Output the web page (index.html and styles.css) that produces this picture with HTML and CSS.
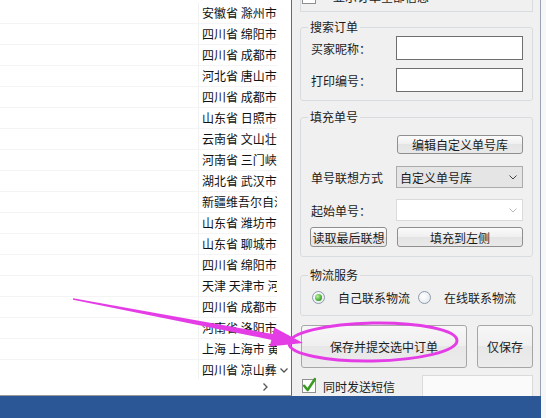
FILE: index.html
```html
<!DOCTYPE html>
<html lang="zh-CN">
<head>
    <meta charset="UTF-8">
    <meta name="viewport" content="width=device-width, initial-scale=1.0">
    <title>打印订单</title>
    <link rel="stylesheet" href="styles.css">
</head>
<body>
    <div class="screen">
        <div class="list">
            <div class="rows">
                <div class="row"><span class="cell">安徽省 滁州市 天长市</span></div>
                <div class="row"><span class="cell">四川省 绵阳市 涪城区</span></div>
                <div class="row"><span class="cell">四川省 成都市 武侯区</span></div>
                <div class="row"><span class="cell">河北省 唐山市 路北区</span></div>
                <div class="row"><span class="cell">四川省 成都市 金牛区</span></div>
                <div class="row"><span class="cell">山东省 日照市 东港区</span></div>
                <div class="row"><span class="cell">云南省 文山壮族苗族自治州</span></div>
                <div class="row"><span class="cell">河南省 三门峡市 湖滨区</span></div>
                <div class="row"><span class="cell">湖北省 武汉市 洪山区</span></div>
                <div class="row"><span class="cell">新疆维吾尔自治区 乌鲁木齐市</span></div>
                <div class="row"><span class="cell">山东省 潍坊市 奎文区</span></div>
                <div class="row"><span class="cell">山东省 聊城市 东昌府区</span></div>
                <div class="row"><span class="cell">四川省 绵阳市 游仙区</span></div>
                <div class="row"><span class="cell">天津 天津市 河西区</span></div>
                <div class="row"><span class="cell">四川省 成都市 青羊区</span></div>
                <div class="row"><span class="cell">河南省 洛阳市 西工区</span></div>
                <div class="row"><span class="cell">上海 上海市 黄浦区</span></div>
                <div class="row"><span class="cell">四川省 凉山彝族自治州</span></div>
            </div>
            <div class="vscroll">
                <svg width="8" height="5" viewBox="0 0 8 5"><polyline points="0.5,0.5 4,4 7.5,0.5" fill="none" stroke="#555" stroke-width="1.3"/></svg>
            </div>
            <div class="hscroll">
                <svg width="5" height="8" viewBox="0 0 5 8"><polyline points="0.5,0.5 4,4 0.5,7.5" fill="none" stroke="#555" stroke-width="1.3"/></svg>
            </div>
        </div>

        <div class="panel">
            <div class="top-group">
                <label class="check"><span class="box"></span>显示订单全部信息</label>
            </div>

            <fieldset class="group search">
                <legend>搜索订单</legend>
                <div class="form">
                    <span>买家昵称：</span><input class="field" type="text">
                    <span>打印编号：</span><input class="field" type="text">
                </div>
            </fieldset>

            <fieldset class="group fill">
                <legend>填充单号</legend>
                <div class="line">
                    <span></span><button class="btn wide">编辑自定义单号库</button>
                </div>
                <div class="line gap-12">
                    <span>单号联想方式</span>
                    <div class="select">自定义单号库
                        <svg width="8" height="5" viewBox="0 0 8 5"><polyline points="0.5,0.5 4,4 7.5,0.5" fill="none" stroke="#444" stroke-width="1"/></svg>
                    </div>
                </div>
                <div class="line gap-11">
                    <span>起始单号：</span>
                    <div class="select combo">
                        <svg width="8" height="5" viewBox="0 0 8 5"><polyline points="0.5,0.5 4,4 7.5,0.5" fill="none" stroke="#b8b8b8" stroke-width="1"/></svg>
                    </div>
                </div>
                <div class="line gap-6">
                    <button class="btn short">读取最后联想</button><button class="btn wide">填充到左侧</button>
                </div>
            </fieldset>

            <fieldset class="group logistics">
                <legend>物流服务</legend>
                <div class="radios">
                    <span class="radio on"></span><span class="radio-text">自己联系物流</span>
                    <span class="radio second"></span><span class="radio-text">在线联系物流</span>
                </div>
            </fieldset>

            <div class="actions">
                <button class="btn big submit">保存并提交选中订单</button>
                <button class="btn big only">仅保存</button>
            </div>

            <div class="sms">
                <span class="box checked">
                    <svg width="14" height="14" viewBox="0 0 14 14"><polyline points="2.2,6.8 5.6,11 12.8,0.2" fill="none" stroke="#3a9a22" stroke-width="2.6" stroke-linecap="round" stroke-linejoin="round"/></svg>
                </span>
                <span class="sms-text">同时发送短信</span>
                <div class="sms-field"></div>
            </div>
        </div>

        <div class="edge"></div>
        <div class="taskbar"></div>
    </div>

    <!-- annotation drawn on top of the screenshot -->
    <svg class="marks" width="546" height="418" viewBox="0 0 546 418">
        <polygon points="73.1,298.3 72.9,299.7 274.4,340.4 275.6,334.6" fill="#e43de6"/>
        <polygon points="274.2,327.6 269.8,346.4 303,343" fill="#e43de6"/>
        <ellipse cx="373" cy="342" rx="84" ry="19" fill="none" stroke="#e43de6" stroke-width="3" transform="rotate(-1 373 342)"/>
    </svg>
</body>
</html>
```

FILE: styles.css
```css
body {
    margin: 0;
    width: 546px;
    height: 418px;
    overflow: hidden;
    font-family: "Noto Sans CJK SC", "Microsoft YaHei", sans-serif;
    font-size: 12px;
    color: #1b1b1b;
    background-color: #f7f7f7;
}
.screen {
    display: grid;
    grid-template-columns: 292px 249px 1fr;
    grid-template-rows: 396px 22px;
    height: 418px;
}

/* order list on the left */
.list {
    display: grid;
    grid-template-columns: 1fr 14px;
    grid-template-rows: 1fr 16px;
    background-color: #ffffff;
    border-right: 1px solid #6a6a6a;
    border-bottom: 1px solid #9a9a9a;
    overflow: hidden;
}
.rows {
    padding-top: 3px;
    overflow: hidden;
}
.row {
    display: grid;
    grid-template-columns: 198px 1fr;
    height: 21px;
    box-sizing: border-box;
    border-bottom: 1px solid #f4f4f4;
}
.cell {
    grid-column: 2;
    padding-left: 3px;
    line-height: 20px;
    white-space: nowrap;
    overflow: hidden;
    border-left: 1px solid #f1f1f1;
    color: #111;
}
.vscroll {
    display: flex;
    align-items: flex-end;
    justify-content: center;
    padding-bottom: 6px;
}
.hscroll {
    display: flex;
    align-items: center;
    justify-content: flex-end;
    padding-right: 9px;
}

/* right side form */
.panel {
    background-color: #f0f0f0;
    border-right: 1px solid #9ba4b4;
    padding: 0 7px 0 8px;
    overflow: hidden;
}
.top-group {
    margin-top: -24px;
    height: 36px;
    box-sizing: border-box;
    border: 1px solid #d9dcdf;
    border-top: none;
    padding: 14px 0 0 1px;
}
.check {
    display: flex;
    align-items: center;
    gap: 17px;
    height: 13px;
    line-height: 13px;
}
.box {
    display: flex;
    align-items: center;
    justify-content: center;
    width: 14px;
    height: 14px;
    box-sizing: border-box;
    border: 1px solid #8e8f8f;
    background-color: #fff;
}
.box svg {
    overflow: visible;
}
.group {
    margin: 0;
    padding: 0 8px 8px 10px;
    border: 1px solid #d9dcdf;
    border-radius: 3px;
    min-width: 0;
}
.group legend {
    padding: 0 2px;
    margin-left: -3px;
    line-height: 16px;
}
.search {
    margin-top: 7px;
    padding-top: 1px;
}
.fill {
    margin-top: 8px;
    padding-top: 10px;
    padding-bottom: 9px;
}
.logistics {
    margin-top: 10px;
    padding-top: 6px;
    padding-bottom: 10px;
}
.form, .line {
    display: grid;
    grid-template-columns: 85px 127px;
    align-items: center;
}
.form {
    row-gap: 8px;
}
.field {
    width: 127px;
    height: 24px;
    margin: 0;
    padding: 0 3px;
    box-sizing: border-box;
    border: 1px solid #6e6e6e;
    background-color: #fff;
    font: inherit;
}
.gap-12 {
    margin-top: 12px;
}
.gap-11 {
    margin-top: 11px;
}
.gap-6 {
    margin-top: 6px;
}
.btn {
    margin: 0;
    padding: 0;
    font: inherit;
    color: #1b1b1b;
    border: 1px solid #8f8f8f;
    border-radius: 3px;
    background: linear-gradient(#fbfbfb, #efefef 50%, #e4e4e4 50%, #e9e9e9);
}
.wide {
    width: 126px;
    height: 19px;
    margin-left: 1px;
}
.gap-6 .btn {
    height: 20px;
}
.short {
    width: 77px;
    margin-left: -1px;
}
.select {
    display: flex;
    align-items: center;
    justify-content: space-between;
    height: 22px;
    box-sizing: border-box;
    padding: 0 5px 0 3px;
    border: 1px solid #acacac;
    background-color: #e5e5e5;
}
.combo {
    justify-content: flex-end;
    border-color: #dadada;
    background-color: #fff;
}
.radios {
    display: flex;
    align-items: center;
    height: 16px;
}
.radio {
    display: flex;
    align-items: center;
    justify-content: center;
    width: 13px;
    height: 13px;
    box-sizing: border-box;
    margin-left: 1px;
    border: 1px solid #8d9bab;
    border-radius: 50%;
    background: radial-gradient(circle at 40% 40%, #ffffff, #dfe5ec);
}
.radio.on::before {
    content: "";
    width: 7px;
    height: 7px;
    border-radius: 50%;
    background: radial-gradient(circle at 35% 35%, #b9f29c, #2f9a1e 75%);
}
.radio.second {
    margin-left: 8px;
}
.radio-text {
    margin-left: 13px;
}
.actions {
    display: flex;
    gap: 10px;
    margin-top: 9px;
    padding-left: 1px;
}
.big {
    height: 43px;
    border-color: #a6a6a6;
    background: linear-gradient(#f7f7f7, #efefef 50%, #e7e7e7 50%, #ececec);
}
.submit {
    width: 166px;
}
.only {
    width: 56px;
}
.sms {
    display: flex;
    align-items: center;
    height: 22px;
    margin-top: 7px;
    padding-left: 2px;
}
.sms-text {
    margin-left: 7px;
}
.sms-field {
    width: 111px;
    height: 22px;
    margin-left: auto;
    box-sizing: border-box;
    border: 1px solid #dadada;
    background-color: #fafafa;
}

.edge {
    grid-column: 3;
    grid-row: 1 / 3;
    background-color: #f7f7f7;
}
.taskbar {
    grid-column: 1 / 3;
    grid-row: 2;
    background-color: #2c5797;
}
.marks {
    position: absolute;
    top: 0;
    left: 0;
    pointer-events: none;
}
```
